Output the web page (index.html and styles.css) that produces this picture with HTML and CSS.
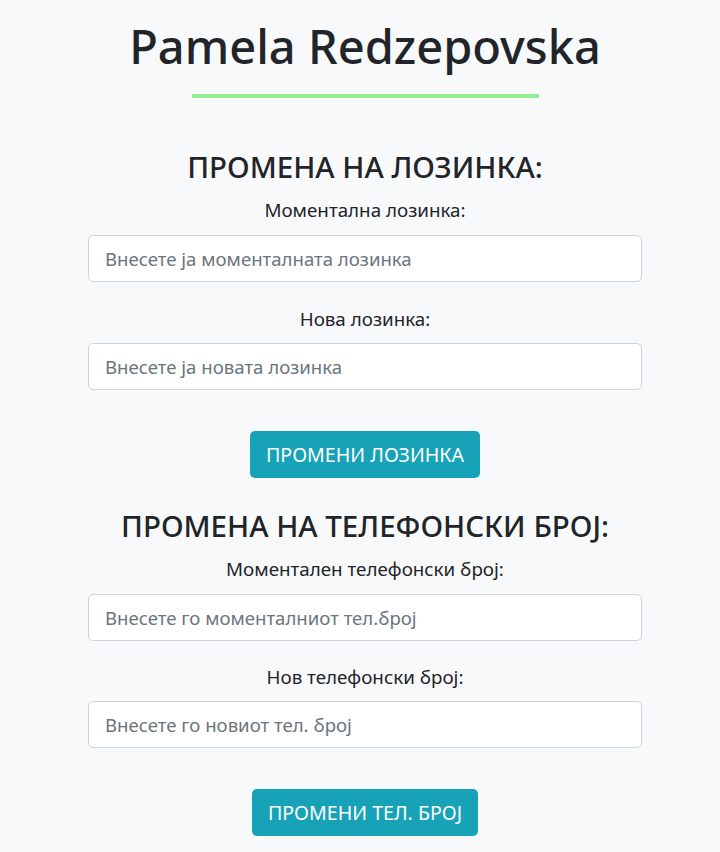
FILE: index.html
```html
<!DOCTYPE html>
<html lang="mk">
<head>
<meta charset="utf-8">
<title>Pamela Redzepovska</title>
<link rel="stylesheet" href="styles.css">
</head>
<body>
<main class="page">
  <h1 class="title">Pamela Redzepovska</h1>
  <div class="rule"></div>

  <section class="panel panel-first">
    <h3 class="panel-heading">ПРОМЕНА НА ЛОЗИНКА:</h3>
    <div class="field">
      <label class="field-label" for="cur-pass">Моментална лозинка:</label>
      <input class="field-input" id="cur-pass" type="password" placeholder="Внесете ја моменталната лозинка">
    </div>
    <div class="field">
      <label class="field-label" for="new-pass">Нова лозинка:</label>
      <input class="field-input" id="new-pass" type="password" placeholder="Внесете ја новата лозинка">
    </div>
    <button class="action" type="button">ПРОМЕНИ ЛОЗИНКА</button>
  </section>

  <section class="panel panel-second">
    <h3 class="panel-heading">ПРОМЕНА НА ТЕЛЕФОНСКИ БРОЈ:</h3>
    <div class="field">
      <label class="field-label" for="cur-phone">Моментален телефонски број:</label>
      <input class="field-input" id="cur-phone" type="text" placeholder="Внесете го моменталниот тел.број">
    </div>
    <div class="field">
      <label class="field-label" for="new-phone">Нов телефонски број:</label>
      <input class="field-input" id="new-phone" type="text" placeholder="Внесете го новиот тел. број">
    </div>
    <button class="action" type="button">ПРОМЕНИ ТЕЛ. БРОЈ</button>
  </section>
</main>
</body>
</html>
```

FILE: styles.css
```css
html, body {
  margin: 0;
  padding: 0;
  background: #f8f9fa;
}

body {
  font-family: "Noto Sans", "Open Sans", "Liberation Sans", sans-serif;
  color: #212529;
}

.page {
  padding: 15px 0 0 10px;
  display: flex;
  flex-direction: column;
  align-items: center;
  text-align: center;
}

.title {
  margin: 0;
  font-size: 47px;
  line-height: 62px;
  font-weight: 500;
}

.rule {
  width: 347px;
  height: 4px;
  background: #90ee90;
  margin-top: 17px;
}

.panel {
  display: flex;
  flex-direction: column;
  align-items: center;
  width: 554px;
}

.panel-first {
  margin-top: 52px;
}

.panel-second {
  margin-top: 31px;
}

.panel-heading {
  margin: 0 0 13px;
  font-size: 29.5px;
  line-height: 34px;
  font-weight: 500;
}

.field {
  display: flex;
  flex-direction: column;
  align-items: center;
  width: 100%;
  margin-bottom: 24px;
}

.panel-second .field {
  margin-bottom: 23px;
}

.field + .field,
.panel-second .field + .field {
  margin-bottom: 41px;
}

.field-label {
  font-size: 18.8px;
  line-height: 27px;
  margin-bottom: 11px;
}

.field + .field .field-label {
  margin-bottom: 10px;
}

.field-input {
  box-sizing: border-box;
  width: 100%;
  height: 47px;
  padding: 0 16px;
  border: 1px solid #ced4da;
  border-radius: 5px;
  background: #fff;
  font-family: inherit;
  font-size: 18.6px;
  color: #495057;
}

.field-input::placeholder {
  color: #6c757d;
  opacity: 1;
}

.action {
  height: 47px;
  padding: 0 16px;
  border: none;
  border-radius: 5px;
  background: #17a2b8;
  color: #fff;
  font-family: inherit;
  font-size: 19.6px;
}
```
